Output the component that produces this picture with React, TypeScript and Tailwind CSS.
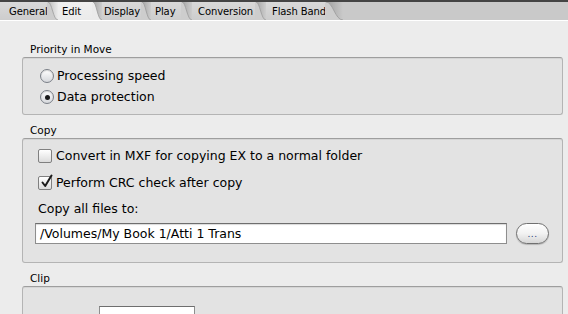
import React from "react";

type Tab = { label: string; w: number; pl: number; slant: number; active?: boolean };

const tabs: Tab[] = [
  { label: "General", w: 47, pl: 9, slant: 11 },
  { label: "Edit", w: 34, pl: 4, slant: 10, active: true },
  { label: "Display", w: 39, pl: 2, slant: 10 },
  { label: "Play", w: 30, pl: 4, slant: 11 },
  { label: "Conversion", w: 63, pl: 6, slant: 11 },
  { label: "Flash Band", w: 59, pl: 6, slant: 18 },
];

const ON = "#ebebeb";
const OFF = "#cdcdcd";
const BAR = "#c9c9c9";

function Slant({ from, to, w, id }: { from: string; to: string; w: number; id: string }) {
  // curved right edge of a tab, with the shadow it casts on the next one
  return (
    <svg width={w} height={18} className="block shrink-0">
      <defs>
        <linearGradient id={id} x1="0" x2="1" y1="0" y2="0">
          <stop offset="0" stopColor="#000" stopOpacity="0.22" />
          <stop offset="1" stopColor="#000" stopOpacity="0" />
        </linearGradient>
      </defs>
      <rect width={w} height={18} fill={to} />
      <path d={`M0 0 C${w * 0.45} 0 ${w * 0.55} 18 ${w} 18 L${w} 0 Z`} fill={`url(#${id})`} />
      <path d={`M0 0 L1 0 C${w * 0.45} 0 ${w * 0.55} 18 ${w} 18 L0 18 Z`} fill={from} />
      <path d={`M1 0 C${w * 0.45} 0 ${w * 0.55} 18 ${w} 18`} fill="none" stroke="#9c9c9c" strokeWidth="0.8" />
    </svg>
  );
}

function Radio({ checked }: { checked?: boolean }) {
  return (
    <span className="w-[14px] h-[14px] rounded-full border border-[#7a7f87] bg-gradient-to-b from-[#ffffff] to-[#d6d8dc] shadow-[inset_0_1px_1px_rgba(0,0,0,0.15)] flex items-center justify-center shrink-0">
      {checked && <span className="w-[5px] h-[5px] rounded-full bg-[#1a1a1a]" />}
    </span>
  );
}

function Check({ checked }: { checked?: boolean }) {
  return (
    <span className="w-[14px] h-[14px] rounded-[2px] border border-[#808080] bg-gradient-to-b from-[#ffffff] to-[#dcdcdc] flex items-center justify-center shrink-0 relative">
      {checked && (
        <svg width="14" height="15" viewBox="0 0 14 15" className="absolute -top-[3px] left-[1px]">
          <path d="M2.5 8.5 L5.2 12 L11.5 1.5" fill="none" stroke="#1c1c1c" strokeWidth="2" strokeLinecap="round" strokeLinejoin="round" />
        </svg>
      )}
    </span>
  );
}

function Group({ title, children, cls }: { title: string; children: React.ReactNode; cls?: string }) {
  return (
    <div>
      <div className="pl-[8px] h-[14px] leading-[14px] text-[10.5px]">{title}</div>
      <div className={`mt-[1px] rounded-[3px] border border-[#b4b4b4] border-t-[#9e9e9e] bg-[#e3e3e3] shadow-[inset_0_1px_0_rgba(0,0,0,0.06)] ${cls ?? ""}`}>
        {children}
      </div>
    </div>
  );
}

export default function App() {
  return (
    <div className="w-[568px] h-[314px] overflow-hidden bg-[#ececec] text-black font-['DejaVu_Sans',sans-serif]">
      <div className="h-[2px] bg-[#444444]" />
      <div className="h-[18px] flex" style={{ background: BAR }}>
        {tabs.map((t, i) => {
          const bg = t.active ? ON : OFF;
          const next = tabs[i + 1];
          const nextBg = next ? (next.active ? ON : OFF) : BAR;
          return (
            <div key={t.label} className="flex shrink-0">
              <div
                className="h-[18px] leading-[19px] text-[10px] whitespace-nowrap tracking-[-0.1px] bg-gradient-to-b from-white/25 to-transparent"
                style={{ width: t.w, paddingLeft: t.pl, backgroundColor: bg }}
              >
                {t.label}
              </div>
              <Slant from={bg} to={nextBg} w={t.slant} id={`s${i}`} />
            </div>
          );
        })}
      </div>
      <div className="h-px bg-white" />

      <div className="pl-[22px] pr-[5px] pt-[21px] flex flex-col gap-[8px]">
        <Group title="Priority in Move" cls="h-[58px] pt-[8px] pl-[17px]">
          <label className="flex items-center gap-[3px] h-[20px] text-[12.5px]">
            <Radio />
            <span>Processing speed</span>
          </label>
          <label className="flex items-center gap-[3px] h-[20px] mt-[1px] text-[12.5px]">
            <Radio checked />
            <span>Data protection</span>
          </label>
        </Group>

        <Group title="Copy" cls="h-[125px] pt-[9px] pl-[15px] pr-[13px] text-[12.5px]">
          <label className="flex items-center gap-[4px] h-[16px]">
            <Check />
            <span>Convert in MXF for copying EX to a normal folder</span>
          </label>
          <label className="flex items-center gap-[4px] h-[16px] mt-[11px]">
            <Check checked />
            <span>Perform CRC check after copy</span>
          </label>
          <div className="h-[16px] leading-[16px] mt-[10px]">Copy all files to:</div>
          <div className="flex items-center mt-[6px] -ml-[3px]">
            <div className="w-[473px] h-[21px] border border-[#8e8e8e] border-t-[#6e6e6e] bg-white pl-[4px] leading-[19px] shadow-[inset_0_1px_1px_rgba(0,0,0,0.15)]">
              /Volumes/My Book 1/Atti 1 Trans
            </div>
            <button className="ml-[9px] w-[33px] h-[21px] rounded-full border border-[#707070] bg-gradient-to-b from-[#ffffff] via-[#f2f2f2] to-[#d6d6d6] shadow-[0_1px_1px_rgba(0,0,0,0.2)] text-[9px] leading-[14px] text-[#1e3a7a] tracking-[0.5px]">
              ...
            </button>
          </div>
        </Group>

        <Group title="Clip" cls="h-[80px] pt-[19px] pl-[15px]">
          <div className="flex items-start pl-[61px]">
            <div className="w-[96px] h-[21px] border border-[#8e8e8e] border-t-[#6e6e6e] bg-white" />
          </div>
        </Group>
      </div>
    </div>
  );
}
